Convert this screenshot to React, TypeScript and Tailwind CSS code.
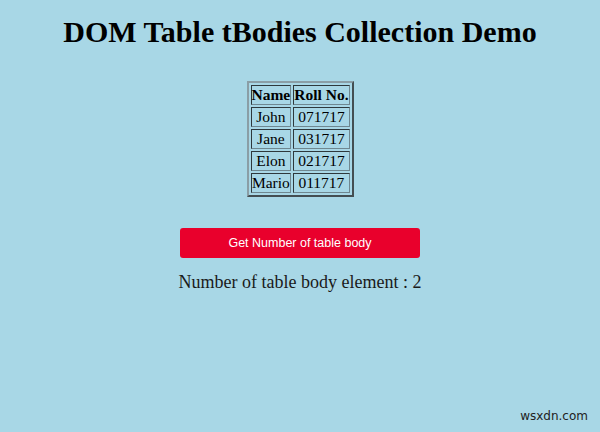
import React, { useState } from 'react';

const ROWS = [
  ['John', '071717'],
  ['Jane', '031717'],
  ['Elon', '021717'],
  ['Mario', '011717'],
];

export default function App() {
  const [count] = useState(2);

  return (
    <div className="relative w-[600px] h-[432px] bg-[#a8d7e6] text-center font-['Liberation_Serif',serif] text-black overflow-hidden">
      <h1 className="pt-[15px] text-[30px] font-bold leading-[34px]">DOM Table tBodies Collection Demo</h1>

      {/* Table */}
      <table className="mx-auto mt-[32px] border-2 [border-style:outset] border-[#8a9ea6] border-separate [border-spacing:2px] text-[15.5px] leading-[16px]">
        <thead>
          <tr>
            <th className="border [border-style:inset] border-[#6f8790] px-0 py-[1px]">Name</th>
            <th className="border [border-style:inset] border-[#6f8790] px-0 py-[1px]">Roll No.</th>
          </tr>
        </thead>
        <tbody>
          {ROWS.map(([name, roll]) => (
            <tr key={roll}>
              <td className="border [border-style:inset] border-[#6f8790] px-0 py-[1px]">{name}</td>
              <td className="border [border-style:inset] border-[#6f8790] px-0 py-[1px]">{roll}</td>
            </tr>
          ))}
        </tbody>
      </table>

      {/* Button */}
      <button className="block mx-auto mt-[31px] w-[240px] h-[30px] rounded-[3px] bg-[#e9002c] text-white text-[12.5px] font-['Liberation_Sans',sans-serif]">
        Get Number of table body
      </button>

      <p className="mt-[13px] text-[18px] leading-[22px] text-[#1a1a1a]">Number of table body element : {count}</p>

      <span className="absolute right-[12px] bottom-[7px] text-[12px] font-['DejaVu_Sans',sans-serif] text-[#222]">wsxdn.com</span>
    </div>
  );
}
